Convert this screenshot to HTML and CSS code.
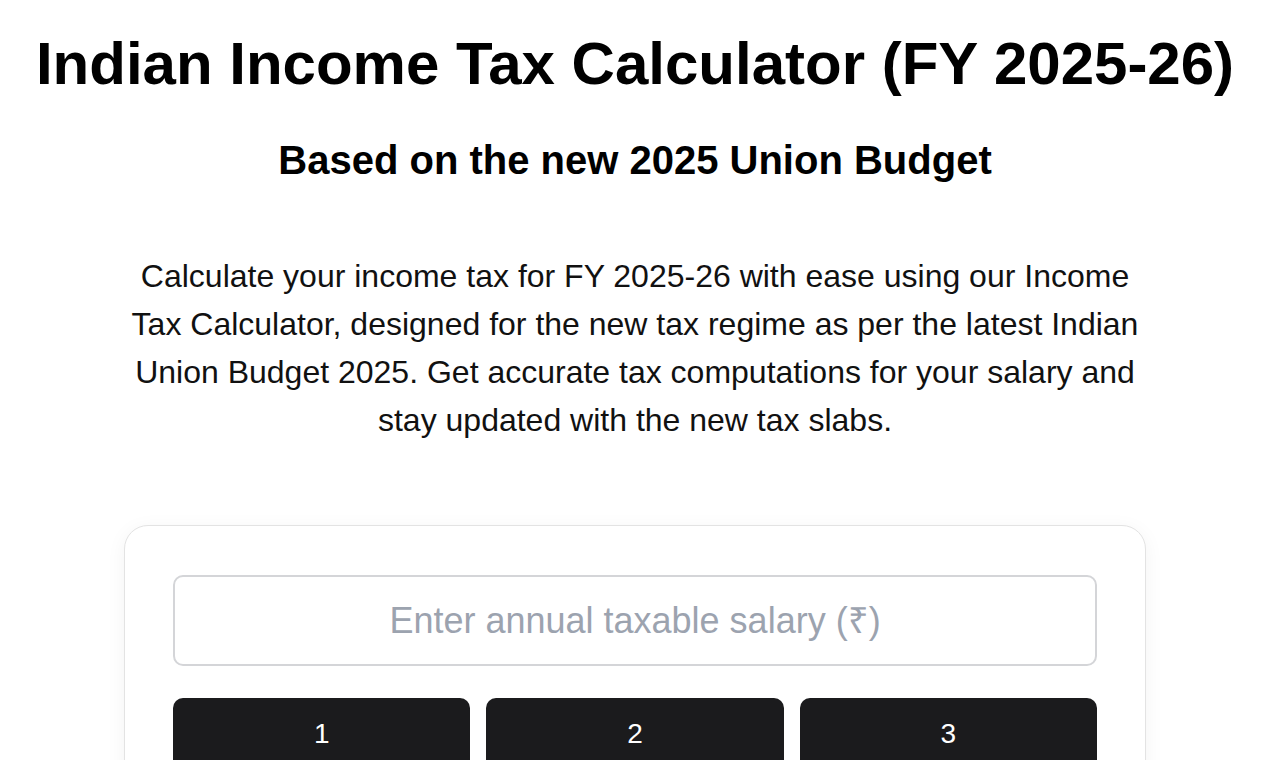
FILE: index.html
```html
<!DOCTYPE html>
<html lang="en">

<head>
    <meta charset="UTF-8">
    <meta name="viewport" content="width=device-width, initial-scale=1.0">
    <title>Indian Income Tax Calculator (FY 2025-26)</title>
    <link rel="stylesheet" href="styles.css">
</head>

<body>
    <div class="page">
        <h1>Indian Income Tax Calculator (FY 2025-26)</h1>
        <h2>Based on the new 2025 Union Budget</h2>
        <p class="intro">Calculate your income tax for FY 2025-26 with ease using our Income Tax Calculator, designed for the new tax regime as per the latest Indian Union Budget 2025. Get accurate tax computations for your salary and stay updated with the new tax slabs.</p>

        <div class="calculator">
            <input type="text" id="salary" class="salary-input" placeholder="Enter annual taxable salary (₹)" readonly>
            <div class="keypad">
                <button class="key">1</button>
                <button class="key">2</button>
                <button class="key">3</button>
                <button class="key">4</button>
                <button class="key">5</button>
                <button class="key">6</button>
            </div>
        </div>
    </div>
</body>

</html>
```

FILE: styles.css
```css
body {
    font-family: "Liberation Sans", Arial, sans-serif;
    margin: 0;
    padding: 0;
    background-color: #fff;
    color: #000;
}

.page {
    padding: 28px 20px;
    text-align: center;
}

h1 {
    font-size: 60px;
    font-weight: bold;
    margin: 0;
    line-height: 72px;
}

h2 {
    font-size: 40px;
    font-weight: bold;
    margin: 36px 0 0;
    line-height: 48px;
}

.intro {
    max-width: 1024px;
    margin: 68px auto 0;
    font-size: 32px;
    line-height: 48px;
    color: #111;
}

.calculator {
    width: 1022px;
    box-sizing: border-box;
    margin: 81px auto 0;
    padding: 49px 48px;
    background: #fff;
    border: 1px solid #e3e3e3;
    border-radius: 24px;
    box-shadow: 0 4px 20px rgba(0, 0, 0, 0.05);
}

.salary-input {
    display: block;
    width: 100%;
    height: 91px;
    box-sizing: border-box;
    border: 2px solid #d4d5d8;
    border-radius: 10px;
    font-family: inherit;
    font-size: 36px;
    text-align: center;
    outline: none;
}

.salary-input::placeholder {
    color: #9ca3af;
}

.keypad {
    display: grid;
    grid-template-columns: repeat(3, 1fr);
    gap: 16px;
    margin-top: 32px;
}

.key {
    background: #1b1b1d;
    color: #fff;
    border: none;
    border-radius: 10px;
    height: 72px;
    font-family: inherit;
    font-size: 28px;
    cursor: pointer;
}
```
